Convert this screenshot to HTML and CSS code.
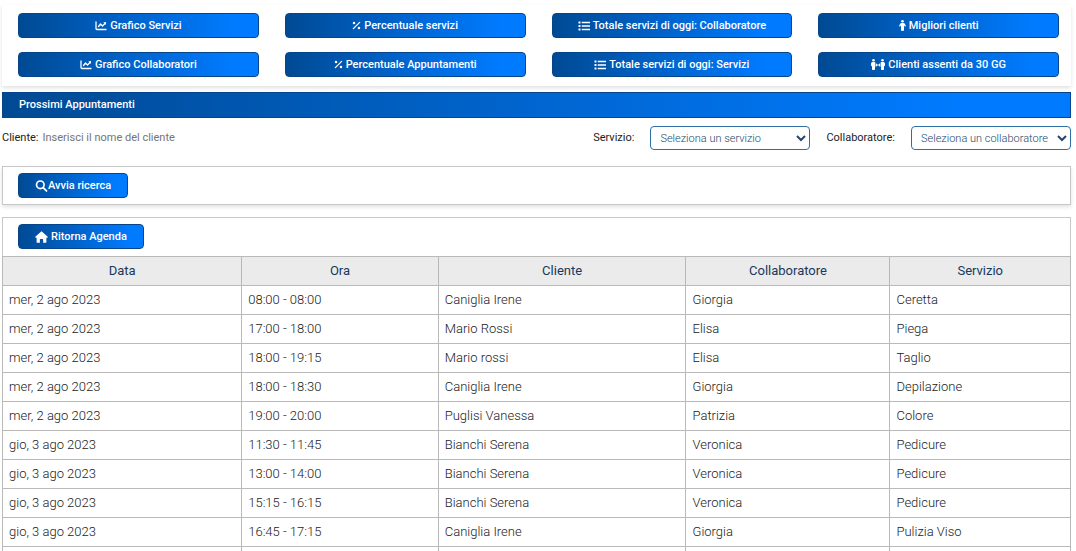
FILE: index.html
```html
<!DOCTYPE html>
<html lang="it">
<head>
<meta charset="utf-8">
<title>Prossimi Appuntamenti</title>
<link rel="stylesheet" href="styles.css">
</head>
<body>
<svg class="sprite" aria-hidden="true">
  <symbol id="chart" viewBox="0 0 24 20"><path d="M2 2v13q0 2 2 2h18M7 11l4-5 4 4 6-6" fill="none" stroke="currentColor" stroke-width="2.6" stroke-linecap="round" stroke-linejoin="round"/><path d="M16.500 2.500H22V8z" fill="currentColor"/></symbol>
  <symbol id="percent" viewBox="0 0 20 20"><path d="M3 17L17 3" stroke="currentColor" stroke-width="2.800" stroke-linecap="round"/><circle cx="4.500" cy="4.500" r="2.800" fill="currentColor"/><circle cx="15.500" cy="15.500" r="2.800" fill="currentColor"/></symbol>
  <symbol id="list" viewBox="0 0 24 20"><path d="M1 1h4v4H1zM1 8h4v4H1zM1 15h4v4H1zM7.500 1.700H24v2.800H7.500zM7.500 8.700H24v2.800H7.500zM7.500 15.700H24v2.800H7.500z" fill="currentColor"/></symbol>
  <symbol id="person" viewBox="0 0 14 22"><circle cx="7" cy="2.600" r="2.600" fill="currentColor"/><path d="M5 6h4q1.500 0 2.300 1.200L14 12l-2 1.300-2-3V21.500H4V10.300l-2 3L0 12l2.700-4.800Q3.500 6 5 6z" fill="currentColor"/></symbol>
  <symbol id="people" viewBox="0 0 28 22"><g fill="currentColor"><circle cx="5" cy="2.600" r="2.600"/><circle cx="23" cy="2.600" r="2.600"/><path d="M3.500 6h3Q9 6 9 8.500L7.500 12 9 15l-1 .8V20.500q0 1.500-1.500 1.500h-3Q2 22 2 20.500V15L0 13V9q0-3 3.500-3zM24.500 6h-3Q19 6 19 8.500l1.500 3.500L19 15l1 .8v4.700q0 1.500 1.500 1.500h3q1.500 0 1.500-1.500V15l2-2V9q0-3-3.500-3zM8 12l4-3.500V11h4V8.500l4 3.500-4 3.500V13h-4v2.500z"/></g></symbol>
  <symbol id="search" viewBox="0 0 20 20"><circle cx="8" cy="8" r="6.300" fill="none" stroke="currentColor" stroke-width="2.800"/><path d="M12.800 12.800L18.300 18.300" stroke="currentColor" stroke-width="3" stroke-linecap="round"/></symbol>
  <symbol id="home" viewBox="0 0 24 21"><path d="M12 0l12 10.500-1.500 1.500H21v8q0 1-1 1h-5v-6q0-1-1-1h-4q-1 0-1 1v6H4q-1 0-1-1v-8H1.500L0 10.500z" fill="currentColor"/></symbol>
</svg>
<main class="page">
  <nav class="panel actions">
    <button class="btn" type="button"><svg class="icon wide"><use href="#chart"/></svg>Grafico Servizi</button>
    <button class="btn" type="button"><svg class="icon small"><use href="#percent"/></svg>Percentuale servizi</button>
    <button class="btn" type="button"><svg class="icon wide"><use href="#list"/></svg>Totale servizi di oggi: Collaboratore</button>
    <button class="btn" type="button"><svg class="icon slim"><use href="#person"/></svg>Migliori clienti</button>
    <button class="btn" type="button"><svg class="icon wide"><use href="#chart"/></svg>Grafico Collaboratori</button>
    <button class="btn" type="button"><svg class="icon small"><use href="#percent"/></svg>Percentuale Appuntamenti</button>
    <button class="btn" type="button"><svg class="icon wide"><use href="#list"/></svg>Totale servizi di oggi: Servizi</button>
    <button class="btn" type="button"><svg class="icon pair"><use href="#people"/></svg>Clienti assenti da 30 GG</button>
  </nav>
  <h1 class="title">Prossimi Appuntamenti</h1>
  <form class="filters">
    <label for="cliente">Cliente:</label>
    <input class="client" id="cliente" type="text" placeholder="Inserisci il nome del cliente">
    <label for="servizio">Servizio:</label>
    <select class="choice" id="servizio"><option>Seleziona un servizio</option></select>
    <label for="collaboratore">Collaboratore:</label>
    <select class="choice" id="collaboratore"><option>Seleziona un collaboratore</option></select>
  </form>
  <section class="panel toolbar search">
    <button class="btn tight" type="button"><svg class="icon large"><use href="#search"/></svg>Avvia ricerca</button>
  </section>
  <section class="panel toolbar agenda">
    <button class="btn" type="button"><svg class="icon large"><use href="#home"/></svg>Ritorna Agenda</button>
  </section>
  <table class="list">
    <colgroup><col class="c-date"><col class="c-time"><col class="c-client"><col class="c-staff"><col class="c-service"></colgroup>
    <thead><tr><th>Data</th><th>Ora</th><th>Cliente</th><th>Collaboratore</th><th>Servizio</th></tr></thead>
    <tbody>
      <tr><td>mer, 2 ago 2023</td><td>08:00 - 08:00</td><td>Caniglia Irene</td><td>Giorgia</td><td>Ceretta</td></tr>
      <tr><td>mer, 2 ago 2023</td><td>17:00 - 18:00</td><td>Mario Rossi</td><td>Elisa</td><td>Piega</td></tr>
      <tr><td>mer, 2 ago 2023</td><td>18:00 - 19:15</td><td>Mario rossi</td><td>Elisa</td><td>Taglio</td></tr>
      <tr><td>mer, 2 ago 2023</td><td>18:00 - 18:30</td><td>Caniglia Irene</td><td>Giorgia</td><td>Depilazione</td></tr>
      <tr><td>mer, 2 ago 2023</td><td>19:00 - 20:00</td><td>Puglisi Vanessa</td><td>Patrizia</td><td>Colore</td></tr>
      <tr><td>gio, 3 ago 2023</td><td>11:30 - 11:45</td><td>Bianchi Serena</td><td>Veronica</td><td>Pedicure</td></tr>
      <tr><td>gio, 3 ago 2023</td><td>13:00 - 14:00</td><td>Bianchi Serena</td><td>Veronica</td><td>Pedicure</td></tr>
      <tr><td>gio, 3 ago 2023</td><td>15:15 - 16:15</td><td>Bianchi Serena</td><td>Veronica</td><td>Pedicure</td></tr>
      <tr><td>gio, 3 ago 2023</td><td>16:45 - 17:15</td><td>Caniglia Irene</td><td>Giorgia</td><td>Pulizia Viso</td></tr>
      <tr><td></td><td></td><td></td><td></td><td></td></tr>
    </tbody>
  </table>
</main>
</body>
</html>
```
FILE: styles.css
```css
* { box-sizing: border-box; }
body {
  margin: 0;
  font: 400 11px/16px Roboto, "Liberation Sans", sans-serif;
  color: #222;
  background: #fff;
}
.sprite { display: none; }
.page { padding: 5px 5px 0 2px; }
.panel { background: #fff; box-shadow: 0 2px 4px rgba(0, 0, 0, .12); }
.actions {
  display: grid;
  grid-template-columns: repeat(4, 1fr);
  gap: 14px 26px;
  padding: 8px 12px 9px 16px;
}
.btn {
  display: flex;
  align-items: center;
  justify-content: center;
  gap: 3px;
  height: 25px;
  padding: 0 16px;
  border: 1px solid #07458a;
  border-radius: 4px;
  background: linear-gradient(to right, #004a94, #007bff 90%);
  color: #fff;
  font: 500 11px/16px Roboto, "Liberation Sans", sans-serif;
  white-space: nowrap;
}
.tight { gap: 0; }
.icon { width: 11px; height: 11px; flex: none; }
.wide { width: 12px; height: 10px; }
.large { width: 13px; height: 12px; }
.small { width: 9px; height: 9px; }
.slim { width: 7px; height: 11px; }
.pair { width: 14px; height: 11px; }
.title {
  margin: 6px 0 0;
  padding: 4px 16px;
  border: 1px solid #07458a;
  background: linear-gradient(to right, #004a94, #007bff 90%);
  color: #fff;
  font-size: 11px;
  font-weight: 500;
}
.filters {
  display: flex;
  align-items: center;
  margin-top: 8px;
  height: 24px;
}
.client {
  flex: 1;
  min-width: 0;
  margin: 0 16px 0 4px;
  padding: 0;
  border: 0;
  background: none;
  font: 400 11px/16px Roboto, "Liberation Sans", sans-serif;
}
.client::placeholder { color: #757575; }
.choice {
  width: 160px;
  height: 24px;
  margin: 0 16px;
  padding: 1px 0 0 5px;
  border: 1px solid #2f6ea5;
  border-radius: 4px;
  background: #fff;
  color: #24476b;
  font: 300 11px/16px Roboto, "Liberation Sans", sans-serif;
}
.choice:last-child { margin-right: 0; }
.toolbar { padding: 6px 15px; border: 1px solid #c8c8c8; }
.search { margin-top: 16px; }
.agenda { margin-top: 12px; padding-bottom: 7px; border-bottom: 0; box-shadow: none; }
.list {
  width: 100%;
  table-layout: fixed;
  border-collapse: collapse;
  font-size: 13px;
  font-weight: 300;
}
.c-date { width: 22.400%; }
.c-time { width: 18.400%; }
.c-client { width: 23.200%; }
.c-staff { width: 19.100%; }
.list th, .list td { padding: 6px; border: 1px solid #b9b9b9; text-align: left; }
.list th { background: #ebebeb; color: #17395c; font-weight: 400; text-align: center; }
```
